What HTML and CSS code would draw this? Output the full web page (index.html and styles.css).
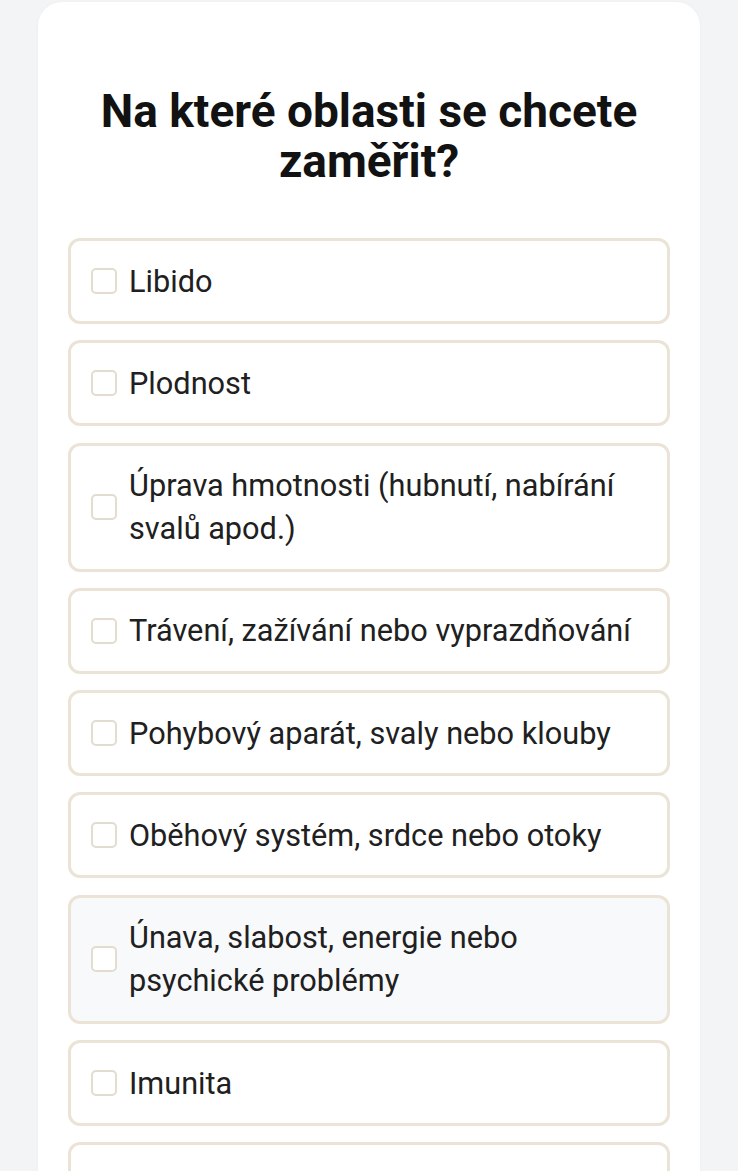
FILE: index.html
```html
<!DOCTYPE html>
<html lang="cs">
<head>
<meta charset="utf-8">
<link rel="stylesheet" href="styles.css">
</head>
<body>
<div class="card">
  <h1 class="title">Na které oblasti se chcete zaměřit?</h1>
  <div class="options">
    <label class="option"><span class="box"></span><span class="text">Libido</span></label>
    <label class="option"><span class="box"></span><span class="text">Plodnost</span></label>
    <label class="option"><span class="box"></span><span class="text">Úprava hmotnosti (hubnutí, nabírání svalů apod.)</span></label>
    <label class="option"><span class="box"></span><span class="text">Trávení, zažívání nebo vyprazdňování</span></label>
    <label class="option"><span class="box"></span><span class="text">Pohybový aparát, svaly nebo klouby</span></label>
    <label class="option"><span class="box"></span><span class="text">Oběhový systém, srdce nebo otoky</span></label>
    <label class="option hover"><span class="box"></span><span class="text">Únava, slabost, energie nebo psychické problémy</span></label>
    <label class="option"><span class="box"></span><span class="text">Imunita</span></label>
    <label class="option empty"></label>
  </div>
</div>
</body>
</html>
```
FILE: styles.css
```css
html, body {
  margin: 0;
  padding: 0;
}
body {
  background: #f3f4f6;
  font-family: Roboto, "Noto Sans", sans-serif;
  color: #1f1f1f;
  height: 1171px;
  overflow: hidden;
}
.card {
  margin: 2px 0 0 38px;
  width: 662px;
  box-sizing: border-box;
  background: #ffffff;
  border-radius: 24px;
  padding: 84px 30px 40px;
  box-shadow: 0 0 3px rgba(0,0,0,0.04);
}
.title {
  margin: 0 0 52px;
  text-align: center;
  font-size: 46px;
  line-height: 50px;
  font-weight: 700;
  color: #121212;
  padding: 0 20px;
}
.options {
  display: flex;
  flex-direction: column;
  gap: 16.3px;
}
.option {
  display: flex;
  align-items: center;
  gap: 12px;
  border: 3px solid #ebe3d5;
  border-radius: 12px;
  padding: 18.5px 20px;
  background: #ffffff;
}
.option.hover {
  background: #f8f9fb;
}
.option.empty {
  height: 43px;
}
.box {
  flex: none;
  width: 22px;
  height: 22px;
  border: 2px solid #e3dccf;
  border-radius: 5px;
  background: #ffffff;
}
.text {
  font-size: 30.7px;
  line-height: 43px;
  color: #202020;
}
```
